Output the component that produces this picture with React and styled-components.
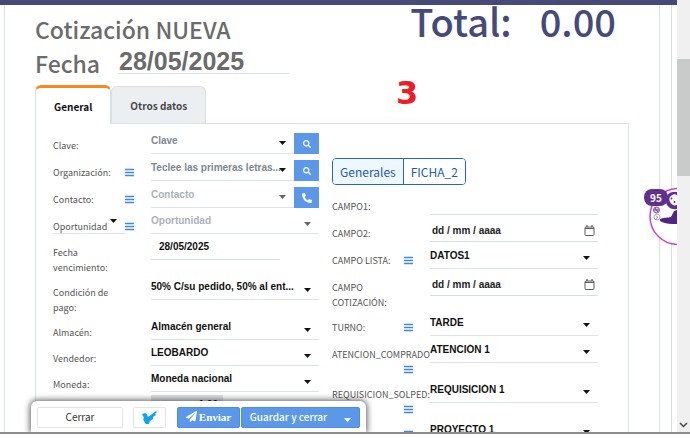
import React from 'react';
import styled, { createGlobalStyle, css } from 'styled-components';
import { FaSearch, FaPhoneAlt, FaPaperPlane } from 'react-icons/fa';

const GlobalStyle = createGlobalStyle`
  * {
    box-sizing: border-box;
  }
  body {
    margin: 0;
    background: #fff;
    font-family: 'Noto Sans CJK SC', 'Open Sans', sans-serif;
    color: #6b6b6b;
  }
  button,
  input,
  select {
    font: inherit;
    margin: 0;
    padding: 0;
    border: 0;
    background: transparent;
    border-radius: 0;
    outline: none;
  }
`;

const arial = css`
  font-family: 'Liberation Sans', Arial, sans-serif;
  font-weight: 700;
`;

const Screen = styled.div`
  position: relative;
  display: grid;
  grid-template-columns: 1fr 13px;
  height: calc(100vh - 4px);
  overflow: hidden;
  border-bottom: 2px solid #8b8b8b;
`;

const Page = styled.div`
  position: relative;
  overflow: hidden;
  border-top: 5px solid #454a78;
  padding: 0 5px 0 4px;
`;

const Outer = styled.div`
  border: solid #d6e2e6;
  border-width: 0 1px;
  padding-right: 11px;
`;

const Sheet = styled.main`
  border-right: 1px solid #d6e2e6;
  padding: 0 30px;
`;

const Header = styled.header`
  display: flex;
  justify-content: space-between;
  align-items: flex-start;
  height: 80px;
  padding-right: 13px;
`;

const Titles = styled.div`
  padding-top: 7px;
  font-size: 23px;
  line-height: 34px;
  font-weight: 500;
`;

const Title = styled.h1`
  margin: 0;
  font: inherit;
`;

const DateLine = styled.div`
  display: flex;
  gap: 18px;
`;

const BigDate = styled.input`
  ${arial}
  width: 171px;
  height: 28px;
  padding: 4px 0 0 1px;
  font-size: 25px;
  line-height: 24px;
  color: #6b6b6b;
  border-bottom: 1px solid #d6e2e6;
`;

const Total = styled.div`
  display: flex;
  gap: 28px;
  font-size: 38px;
  line-height: 32px;
  font-weight: 500;
  color: #454a78;
`;

const Annotation = styled.div`
  position: absolute;
  left: 396px;
  top: 70px;
  font: 700 32px/36px 'DejaVu Sans', sans-serif;
  color: #ee1c25;
`;

const Tabs = styled.div`
  display: flex;
  align-items: flex-end;
`;

const Tab = styled.button`
  height: 37px;
  padding: 0 18px;
  font-size: 10px;
  font-weight: 700;
  color: #484848;
  background: #eceff2;
  border: 1px solid #d6e2e6;
  border-bottom: 0;
  border-radius: 6px 6px 0 0;
  ${props =>
    props.$active &&
    css`
      height: 39px;
      margin-bottom: -1px;
      color: #111;
      background: #fff;
      border-top: 3px solid #f58a1f;
    `}
`;

const Panel = styled.section`
  display: grid;
  grid-template-columns: 1fr 1fr;
  gap: 13px;
  padding: 3px 30px 0 17px;
  border: 1px solid #d6e2e6;
`;

const Column = styled.div`
  min-width: 0;
`;

const Row = styled.div`
  display: grid;
  grid-template-columns: 98px 1fr;
  align-items: start;
  height: ${props => (props.$double ? 40 : props.$compact ? 26 : 27)}px;
  --control: ${props => (props.$compact ? 26 : 27)}px;
`;

const LabelCell = styled.div`
  display: flex;
  flex-wrap: wrap;
  justify-content: space-between;
  min-width: 0;
  padding: 11px 17px 0 0;
  font-size: 9px;
  line-height: 15px;
  font-weight: 400;
  color: #555;
`;

const LabelText = styled.label`
  white-space: pre;
`;

const MenuButton = styled.button`
  display: flex;
  align-items: center;
  height: 15px;
  margin-left: auto;
  color: #3f87ea;
`;

const Control = styled.div`
  display: flex;
  min-width: 0;
  background: #fff;
`;

const SelectWrap = styled.div`
  display: grid;
  flex: 1;
  min-width: 0;
  grid-template-columns: minmax(0, 1fr);
  align-items: center;
  height: var(--control);
  border-bottom: 1px solid #dbe3e8;

  select,
  svg {
    grid-area: 1 / 1;
  }
  svg {
    justify-self: end;
    margin: 6px 8px 0 0;
    pointer-events: none;
    color: ${props => (props.$muted ? '#666' : '#111')};
  }
`;

const Select = styled.select`
  ${arial}
  appearance: none;
  width: 100%;
  height: 24px;
  padding-right: 8px;
  font-size: 10px;
  color: ${props => props.$color || '#111'};
`;

const TypeSelect = styled.div`
  display: grid;
  width: 72px;
  height: 15px;
  border-bottom: 1px solid #dbe3e8;

  select,
  svg {
    grid-area: 1 / 1;
  }
  select {
    appearance: none;
    color: #555;
  }
  svg {
    justify-self: end;
    margin-right: 8px;
    color: #111;
    pointer-events: none;
  }
`;

const DateBox = styled.div`
  display: flex;
  align-items: center;
  width: ${props => (props.$short ? '129px' : '100%')};
  height: var(--control);
  padding: ${props => (props.$short ? '0 0 0 8px' : '4px 3px 0 2px')};
  border-bottom: 1px solid #cfdfe8;
`;

const TextInput = styled.input`
  ${arial}
  flex: 1;
  min-width: 0;
  width: 100%;
  font-size: 10px;
  color: #111;

  &::placeholder {
    color: #222;
    opacity: 1;
  }
`;

const RateInput = styled(TextInput)`
  flex: none;
  width: 72px;
  height: 18px;
  margin-top: 3px;
  padding-right: 5px;
  text-align: right;
  background: #dfe3e5;
`;

const IconButton = styled.button`
  display: flex;
  align-items: center;
  justify-content: center;
  width: 25px;
  height: 21px;
  margin-top: 6px;
  color: #fff;
  background: #5b98ea;
`;

const Pills = styled.div`
  display: flex;
  width: max-content;
  height: 27px;
  margin: 31px 0 3px;
  border: 1px solid #2468b8;
  border-radius: 4px;
  overflow: hidden;
`;

const Pill = styled.button`
  padding: 0 7px;
  font-size: 12px;
  line-height: 25px;
  color: #1f5cab;
  background: ${props => (props.$active ? '#eef6fe' : '#fff')};

  & + & {
    border-left: 1px solid #2468b8;
  }
`;

const ActionBar = styled.div`
  position: absolute;
  left: 31px;
  bottom: 0;
  display: flex;
  width: 335px;
  height: 31px;
  padding: 6px 6px 0;
  background: #fff;
  border-radius: 6px 6px 0 0;
  box-shadow: 0 0 6px 1px rgba(0, 0, 0, 0.65);
`;

const ActionButton = styled.button`
  display: flex;
  align-items: center;
  justify-content: center;
  gap: 2px;
  height: 21px;
  padding-bottom: 2px;
  border-radius: 2px;
  font-size: 10px;
  ${props =>
    props.$primary
      ? css`
          color: #fff;
          font-weight: 500;
          background: #5b98ea;
          border: 1px solid #4f8de2;
        `
      : css`
          color: #333;
          background: #fff;
          border: 1px solid #e4e4e4;
        `}
`;

const CloseButton = styled(ActionButton)`
  width: 86px;
  margin-right: 10px;
`;

const CheckButton = styled(ActionButton)`
  width: 33px;
  margin-right: 11px;
`;

const SendButton = styled(ActionButton)`
  width: 63px;
  margin-right: 1px;
  font-family: 'Liberation Serif', serif;
  font-size: 11px;
  font-weight: 700;
`;

const SaveButton = styled(ActionButton)`
  flex: 1;
  gap: 17px;

  svg {
    margin-top: 7px;
  }
`;

const Scrollbar = styled.div`
  display: flex;
  flex-direction: column;
  align-items: center;
  background: #f0f0f0;
  padding: 59px 0 4px;
`;

const Thumb = styled.div`
  width: 100%;
  height: 117px;
  margin-bottom: auto;
  background: #c9cbcb;
`;

const Chat = styled.button`
  position: absolute;
  right: 0;
  top: 180px;
  width: 34px;
  height: 62px;
`;

const Badge = styled.span`
  position: absolute;
  left: 1px;
  top: 4px;
  width: 24px;
  height: 17px;
  border-radius: 8px;
  background: #60308f;
  color: #fff;
  font-size: 10px;
  line-height: 17px;
  font-weight: 700;
`;

const Caret = () => (
  <svg width="7" height="4" viewBox="0 0 7 4" aria-hidden="true">
    <path d="M0 0h7L3.500 4z" fill="currentColor" />
  </svg>
);

const Bars = () => (
  <svg width="9" height="9" viewBox="0 0 9 9" aria-hidden="true">
    <path d="M0 1.500h9M0 4.500h9M0 7.500h9" stroke="currentColor" strokeWidth="1.400" />
  </svg>
);

const Calendar = () => (
  <svg width="11" height="11" viewBox="0 0 11 11" aria-hidden="true">
    <rect x="1" y="2" width="9" height="8.500" rx="1" fill="none" stroke="#5b5b66" />
    <path d="M1 3.500h9M3 0v2M8 0v2" stroke="#5b5b66" strokeWidth="1.200" />
  </svg>
);

const Check = () => (
  <svg width="15" height="14" viewBox="0 0 15 14" aria-hidden="true">
    <path
      d="M0 4l3-1 2 1 1 3 4-3 4-3 1 1-2 2 1 1-3 2v2l-3 2-1 3-2 1-2-2-1-2-1-2 1-1z"
      fill="#0da4f5"
    />
  </svg>
);

const Monkey = () => (
  <svg width="34" height="62" viewBox="0 0 34 62" aria-hidden="true">
    <circle cx="35" cy="31.500" r="28" fill="#fff" stroke="#cb3fe2" strokeWidth="1.500" />
    <path d="M24 12c1-4 4-5 7-5h3v3c-2-1-4-1-6 1-2 1-2 4-1 6 2 3 4 4 7 3v4c-6 1-9-2-11-6z" fill="#60308f" />
    <path d="M17 34c5-2 8-1 11-2l3-6 3-1v14h-5c-4 0-9-1-12-3z" fill="#4e2585" />
    <circle cx="28.500" cy="13.500" r="1" fill="#60308f" />
    <circle cx="31.500" cy="17" r="1" fill="#60308f" />
    <circle cx="13.500" cy="25" r="3" fill="#d9c8ea" stroke="#7d52a8" />
    <path d="M11 25h5M12 23l3 4" stroke="#60308f" strokeWidth=".8" />
    <circle cx="14" cy="32" r="3" fill="#fff" stroke="#b79bd1" />
    <path d="M13 30.500l1.500 1.500-1 2" stroke="#7d52a8" fill="none" strokeWidth=".8" />
  </svg>
);

function Field({ id, label, menu, double, compact, children }) {
  return (
    <Row $double={double} $compact={compact}>
      <LabelCell>
        <LabelText htmlFor={id}>{label}</LabelText>
        {menu && (
          <MenuButton aria-label="Menú">
            <Bars />
          </MenuButton>
        )}
      </LabelCell>
      <Control>{children}</Control>
    </Row>
  );
}

function Dropdown({ id, value, color, muted }) {
  return (
    <SelectWrap $muted={muted}>
      <Select id={id} $color={color}>
        <option>{value}</option>
      </Select>
      <Caret />
    </SelectWrap>
  );
}

function DateField({ id }) {
  return (
    <DateBox>
      <TextInput id={id} placeholder="dd / mm / aaaa" />
      <Calendar />
    </DateBox>
  );
}

export default function App() {
  return (
    <>
      <GlobalStyle />
      <Screen>
        <Page>
          <Outer>
            <Sheet>
              <Header>
                <Titles>
                  <Title>Cotización NUEVA</Title>
                  <DateLine>
                    <label htmlFor="fecha">Fecha</label>
                    <BigDate id="fecha" defaultValue="28/05/2025" />
                  </DateLine>
                </Titles>
                <Total>
                  <span>Total:</span>
                  <span>0.00</span>
                </Total>
              </Header>
              <Tabs>
                <Tab $active>General</Tab>
                <Tab>Otros datos</Tab>
              </Tabs>
              <Panel>
                <Column>
                  <Field id="clave" label="Clave:">
                    <Dropdown id="clave" value="Clave" color="#7b8794" />
                    <IconButton aria-label="Buscar clave">
                      <FaSearch size={8} />
                    </IconButton>
                  </Field>
                  <Field id="organizacion" label="Organización:" menu>
                    <Dropdown
                      id="organizacion"
                      value="Teclee las primeras letras..."
                      color="#7b8794"
                    />
                    <IconButton aria-label="Buscar organización">
                      <FaSearch size={8} />
                    </IconButton>
                  </Field>
                  <Field id="contacto" label="Contacto:" menu>
                    <Dropdown id="contacto" value="Contacto" color="#a9b2bb" muted />
                    <IconButton aria-label="Llamar">
                      <FaPhoneAlt size={10} />
                    </IconButton>
                  </Field>
                  <Row $compact>
                    <LabelCell>
                      <TypeSelect>
                        <select aria-label="Tipo">
                          <option>Oportunidad</option>
                        </select>
                        <Caret />
                      </TypeSelect>
                      <MenuButton aria-label="Menú">
                        <Bars />
                      </MenuButton>
                    </LabelCell>
                    <Control>
                      <Dropdown id="oportunidad" value="Oportunidad" color="#a9b2bb" muted />
                    </Control>
                  </Row>
                  <Field id="vencimiento" label={'Fecha\nvencimiento:'} double compact>
                    <DateBox $short>
                      <TextInput id="vencimiento" defaultValue="28/05/2025" />
                    </DateBox>
                  </Field>
                  <Field id="pago" label={'Condición de\npago:'} double compact>
                    <Dropdown id="pago" value="50% C/su pedido, 50% al ent..." />
                  </Field>
                  <Field id="almacen" label="Almacén:" compact>
                    <Dropdown id="almacen" value="Almacén general" />
                  </Field>
                  <Field id="vendedor" label="Vendedor:" compact>
                    <Dropdown id="vendedor" value="LEOBARDO" />
                  </Field>
                  <Field id="moneda" label="Moneda:" compact>
                    <Dropdown id="moneda" value="Moneda nacional" />
                  </Field>
                  <Field id="cambio" label="" compact>
                    <RateInput id="cambio" defaultValue="1.00" />
                  </Field>
                </Column>
                <Column>
                  <Pills>
                    <Pill $active>Generales</Pill>
                    <Pill>FICHA_2</Pill>
                  </Pills>
                  <Field id="campo1" label="CAMPO1:">
                    <DateBox>
                      <TextInput id="campo1" />
                    </DateBox>
                  </Field>
                  <Field id="campo2" label="CAMPO2:">
                    <DateField id="campo2" />
                  </Field>
                  <Field id="lista" label="CAMPO LISTA:" menu>
                    <Dropdown id="lista" value="DATOS1" />
                  </Field>
                  <Field id="cotizacion" label={'CAMPO\nCOTIZACIÓN:'} double>
                    <DateField id="cotizacion" />
                  </Field>
                  <Field id="turno" label="TURNO:" menu>
                    <Dropdown id="turno" value="TARDE" />
                  </Field>
                  <Field id="atencion" label="ATENCION_COMPRADOR" menu double>
                    <Dropdown id="atencion" value="ATENCIÓN 1" />
                  </Field>
                  <Field id="requisicion" label="REQUISICION_SOLPED:" menu double>
                    <Dropdown id="requisicion" value="REQUISICIÓN 1" />
                  </Field>
                  <Field id="proyecto" label="" menu>
                    <Dropdown id="proyecto" value="PROYECTO 1" />
                  </Field>
                </Column>
              </Panel>
            </Sheet>
          </Outer>
          <Annotation>3</Annotation>
          <Chat aria-label="Chat">
            <Monkey />
            <Badge>95</Badge>
          </Chat>
          <ActionBar>
            <CloseButton>Cerrar</CloseButton>
            <CheckButton aria-label="Guardar">
              <Check />
            </CheckButton>
            <SendButton $primary>
              <FaPaperPlane size={11} />
              Enviar
            </SendButton>
            <SaveButton $primary>
              Guardar y cerrar
              <Caret />
            </SaveButton>
          </ActionBar>
        </Page>
        <Scrollbar>
          <Thumb />
          <svg width="9" height="6" viewBox="0 0 9 6" aria-hidden="true">
            <path d="M1 1l3.500 3.500L8 1" fill="none" stroke="#444" strokeWidth="1.500" />
          </svg>
        </Scrollbar>
      </Screen>
    </>
  );
}
